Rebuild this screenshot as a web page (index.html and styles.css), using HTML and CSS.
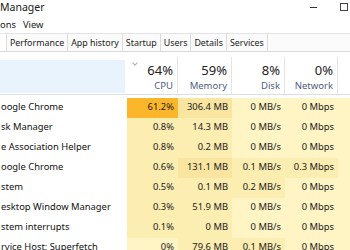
FILE: index.html
```html
<!DOCTYPE html>
<html>
<head>
<meta charset="utf-8">
<link rel="stylesheet" href="styles.css">
</head>
<body>
<div class="win">
  <div class="titlebar">
    <span class="title">Manager</span>
    <div class="controls">
      <span class="ctl-min"></span>
      <span class="ctl-max"></span>
    </div>
  </div>
  <div class="menu"><span>ons</span><span>View</span></div>
  <div class="tabs">
    <span class="tab sel"></span>
    <span class="tab">Performance</span>
    <span class="tab">App history</span>
    <span class="tab">Startup</span>
    <span class="tab">Users</span>
    <span class="tab">Details</span>
    <span class="tab">Services</span>
  </div>
  <div class="grid head">
    <div class="hname"></div>
    <div class="hcell sorted"><span class="chev"></span><span class="pct">64%</span><span class="lbl">CPU</span></div>
    <div class="hcell"><span class="pct">59%</span><span class="lbl">Memory</span></div>
    <div class="hcell"><span class="pct">8%</span><span class="lbl">Disk</span></div>
    <div class="hcell"><span class="pct">0%</span><span class="lbl">Network</span></div>
    <div class="hcell last"></div>
  </div>
  <div class="rows">
    <div class="grid row"><div class="name">oogle Chrome</div><div class="v h5">61.2%</div><div class="v h2">306.4 MB</div><div class="v h0">0 MB/s</div><div class="v h0">0 Mbps</div><div class="v h0"></div></div>
    <div class="grid row"><div class="name">sk Manager</div><div class="v h1">0.8%</div><div class="v h1">14.3 MB</div><div class="v h0">0 MB/s</div><div class="v h0">0 Mbps</div><div class="v h0"></div></div>
    <div class="grid row"><div class="name">e Association Helper</div><div class="v h1">0.8%</div><div class="v h1">0.2 MB</div><div class="v h0">0 MB/s</div><div class="v h0">0 Mbps</div><div class="v h0"></div></div>
    <div class="grid row"><div class="name">oogle Chrome</div><div class="v h1">0.6%</div><div class="v h2">131.1 MB</div><div class="v h1">0.1 MB/s</div><div class="v h1">0.3 Mbps</div><div class="v h0"></div></div>
    <div class="grid row"><div class="name">stem</div><div class="v h1">0.5%</div><div class="v h1">0.1 MB</div><div class="v h1">0.2 MB/s</div><div class="v h0">0 Mbps</div><div class="v h0"></div></div>
    <div class="grid row"><div class="name">esktop Window Manager</div><div class="v h1">0.3%</div><div class="v h1">51.9 MB</div><div class="v h0">0 MB/s</div><div class="v h0">0 Mbps</div><div class="v h0"></div></div>
    <div class="grid row"><div class="name">stem interrupts</div><div class="v h1">0.1%</div><div class="v h1">0 MB</div><div class="v h0">0 MB/s</div><div class="v h0">0 Mbps</div><div class="v h0"></div></div>
    <div class="grid row"><div class="name">rvice Host: Superfetch</div><div class="v h0">0%</div><div class="v h1">79.6 MB</div><div class="v h1">0.1 MB/s</div><div class="v h0">0 Mbps</div><div class="v h0"></div></div>
  </div>
</div>
</body>
</html>
```
FILE: styles.css
```css
html, body {
  margin: 0;
  padding: 0;
  background: #ffffff;
}
.win {
  width: 350px;
  height: 250px;
  overflow: hidden;
  font-family: "Noto Sans", "Open Sans", sans-serif;
  font-size: 9.4px;
  color: #1a1a1a;
}
.titlebar {
  height: 13px;
  display: flex;
  align-items: center;
  justify-content: space-between;
}
.title {
  font-size: 10.5px;
}
.controls {
  display: flex;
  align-items: center;
  gap: 23px;
  padding-right: 2px;
  margin-top: 1px;
}
.ctl-min {
  width: 7px;
  height: 1px;
  background: #333;
  margin-top: 1px;
}
.ctl-max {
  width: 6px;
  height: 6px;
  border: 1px solid #444;
}
.menu {
  height: 17px;
  margin-top: 3px;
  display: flex;
  align-items: center;
  gap: 7px;
}
.tabs {
  height: 17px;
  border-top: 1px solid #e4e4e4;
  border-bottom: 1px solid #d9d9d9;
  display: flex;
  align-items: stretch;
  background: #fbfbfb;
  font-size: 8.9px;
}
.tab {
  display: flex;
  align-items: center;
  padding: 0 3px;
  border-right: 1px solid #dcdcdc;
  color: #222;
}
.tab.sel {
  width: 6px;
  padding: 0;
  background: #fff;
}
.grid {
  display: grid;
  grid-template-columns: 127px 51px 54px 53px 53px 1fr;
}
.head {
  margin-top: 5px;
  height: 37px;
  border-bottom: 1px solid #dedede;
}
.hname {
  background: #e8f3fd;
  margin: 3px 2px 1px 0;
}
.hcell {
  display: flex;
  flex-direction: column;
  align-items: flex-end;
  padding-right: 4px;
  border-right: 1px solid #e4e4e4;
}
.sorted {
  position: relative;
}
.chev {
  position: absolute;
  left: 6px;
  top: 4px;
  width: 3px;
  height: 3px;
  border-right: 1px solid #b0b0b0;
  border-bottom: 1px solid #b0b0b0;
  transform: rotate(45deg);
}
.hcell.last {
  border-right: none;
}
.pct {
  font-size: 13px;
  color: #222;
  margin-top: 5px;
  line-height: 16px;
}
.lbl {
  font-size: 9.5px;
  color: #4d6082;
  line-height: 14px;
  margin-top: 1px;
}
.rows {
  margin-top: 3px;
}
.row {
  height: 20px;
  align-items: stretch;
}
.name, .v {
  display: flex;
  align-items: center;
  padding-bottom: 3px;
  white-space: nowrap;
}
.name {
  padding-left: 1px;
  color: #111;
}
.v {
  justify-content: flex-end;
  padding-right: 4px;
  color: #222;
}
.h0 { background: #fff4c4; }
.h1 { background: #fcedb0; }
.h2 { background: #f9e5a0; }
.h5 { background: #fcb62b; }
```
